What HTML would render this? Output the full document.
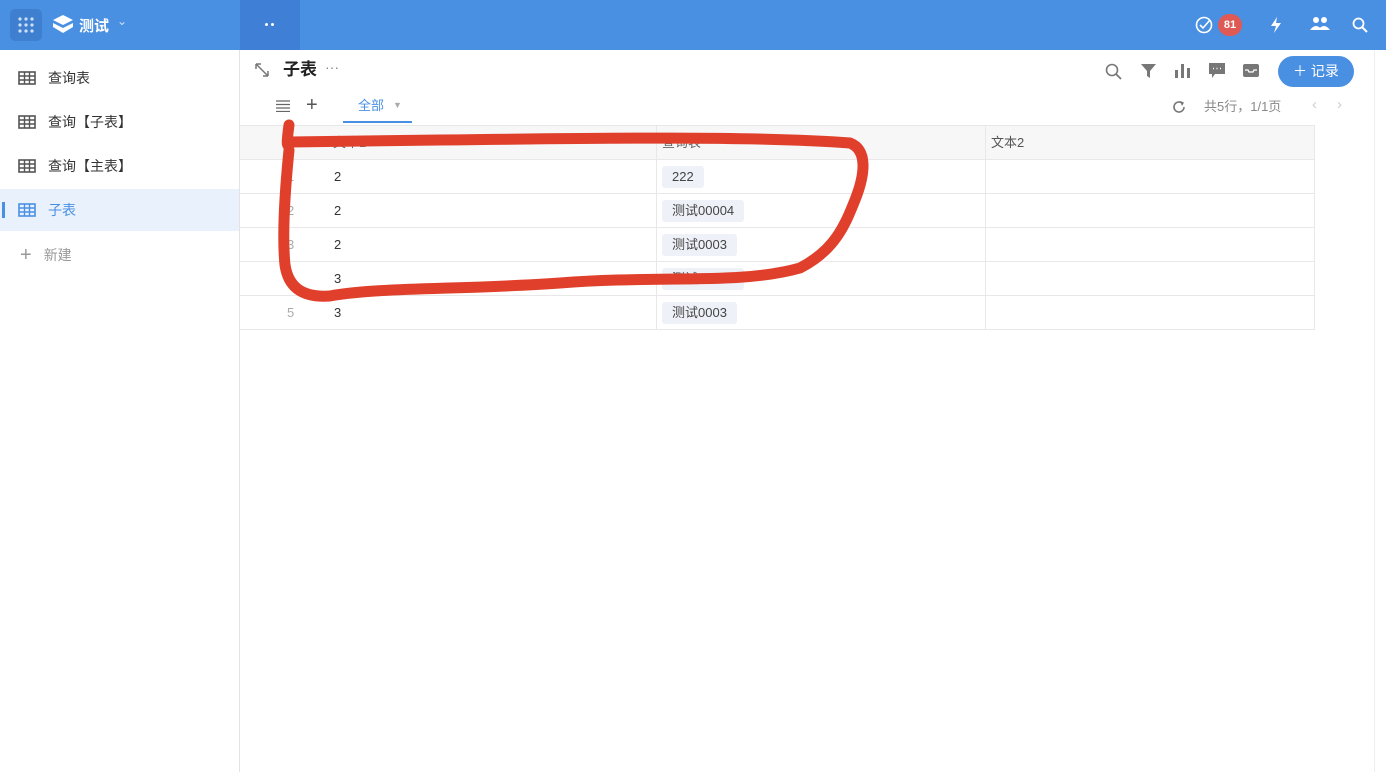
<!DOCTYPE html>
<html><head><meta charset="utf-8"><style>
*{margin:0;padding:0;box-sizing:border-box}
body{width:1386px;height:772px;overflow:hidden;background:#fff;font-family:"Liberation Sans","Noto Sans CJK SC",sans-serif;color:#333;position:relative;font-size:14px}
.top{position:absolute;left:0;top:0;width:1386px;height:50px;background:#4a90e2}
.side{position:absolute;left:0;top:50px;width:240px;height:722px;border-right:1px solid #e3e3e3;background:#fff}
.item{position:absolute;left:0;width:239px;height:42px;display:flex;align-items:center;padding-left:18px;font-size:14px;color:#333}
.item svg{margin-right:12px}
.abs{position:absolute}
.row{position:absolute;left:0;width:1074px;height:34px;border-bottom:1px solid #e8e8e8;font-size:13px}
.row div{position:absolute;top:0;height:34px;line-height:34px}
.tag{display:inline-block;background:#eef1f8;border-radius:3px;padding:0 10px;line-height:22px;height:22px;margin-top:6px;color:#444;font-size:13px}
.vl{position:absolute;top:125px;height:205px;width:1px;background:#e8e8e8}
</style></head><body>
<div class="top">
 <div class="abs" style="left:10px;top:9px;width:32px;height:32px;background:#3f7fcf;border-radius:5px"></div>
 <svg class="abs" style="left:18px;top:17px" width="16" height="16"><g fill="#cfe0f7"><circle cx="2" cy="2" r="1.6"/><circle cx="8" cy="2" r="1.6"/><circle cx="14" cy="2" r="1.6"/><circle cx="2" cy="8" r="1.6"/><circle cx="8" cy="8" r="1.6"/><circle cx="14" cy="8" r="1.6"/><circle cx="2" cy="14" r="1.6"/><circle cx="8" cy="14" r="1.6"/><circle cx="14" cy="14" r="1.6"/></g></svg>
 <svg class="abs" style="left:52px;top:14px" width="22" height="20"><path d="M11 1 L21 6 L11 11 L1 6Z" fill="#fff"/><path d="M1 9 L11 14 L21 9 L21 13 L11 19 L1 13Z" fill="#fff"/></svg>
 <div class="abs" style="left:79px;top:15px;color:#fff;font-size:15px;font-weight:bold">测试</div>
 <div class="abs" style="left:117px;top:14px;color:#cfe0f7;font-size:12px">⌄</div>
 <div class="abs" style="left:240px;top:0;width:60px;height:50px;background:#3f80d6"></div>
 <div class="abs" style="left:265px;top:23px;width:3px;height:3px;background:#fff;border-radius:2px"></div>
 <div class="abs" style="left:271px;top:23px;width:3px;height:3px;background:#fff;border-radius:2px"></div>
 <svg class="abs" style="left:1195px;top:16px" width="18" height="18"><circle cx="9" cy="9" r="7.5" fill="none" stroke="#fff" stroke-width="1.6"/><path d="M5 9 L8 12 L15 4" fill="none" stroke="#fff" stroke-width="1.6"/></svg>
 <div class="abs" style="left:1218px;top:14px;width:24px;height:22px;border-radius:11px;background:#e05a55;color:#fff;font-size:11px;font-weight:bold;text-align:center;line-height:22px">81</div>
 <svg class="abs" style="left:1267px;top:16px" width="18" height="18"><path d="M10 1 L4 10 L9 10 L7 17 L14 7 L9 7 Z" fill="#fff"/></svg>
 <svg class="abs" style="left:1310px;top:16px" width="20" height="16"><circle cx="6" cy="4" r="3" fill="#fff"/><circle cx="14" cy="4" r="3" fill="#fff"/><path d="M0 14 Q6 6 12 14Z M8 14 Q14 6 20 14Z" fill="#fff"/></svg>
 <svg class="abs" style="left:1352px;top:17px" width="16" height="16"><circle cx="6.5" cy="6.5" r="5" fill="none" stroke="#fff" stroke-width="1.8"/><path d="M10 10 L15 15" stroke="#fff" stroke-width="2"/></svg>
</div>
<div class="side">
 <div class="item" style="top:7px"><svg width="18" height="14"><rect x="1" y="1" width="16" height="12" fill="none" stroke="#555" stroke-width="1.6"/><path d="M1 5H17M1 9H17M6.5 1V13M11.5 1V13" stroke="#555" stroke-width="1.4"/></svg>查询表</div>
 <div class="item" style="top:51px"><svg width="18" height="14"><rect x="1" y="1" width="16" height="12" fill="none" stroke="#555" stroke-width="1.6"/><path d="M1 5H17M1 9H17M6.5 1V13M11.5 1V13" stroke="#555" stroke-width="1.4"/></svg>查询【子表】</div>
 <div class="item" style="top:95px"><svg width="18" height="14"><rect x="1" y="1" width="16" height="12" fill="none" stroke="#555" stroke-width="1.6"/><path d="M1 5H17M1 9H17M6.5 1V13M11.5 1V13" stroke="#555" stroke-width="1.4"/></svg>查询【主表】</div>
 <div class="item" style="top:139px;background:#e8f1fc;color:#4a90e2"><div class="abs" style="left:2px;top:13px;width:3px;height:16px;background:#4a90e2"></div><svg width="18" height="14"><rect x="1" y="1" width="16" height="12" fill="none" stroke="#4a90e2" stroke-width="1.6"/><path d="M1 5H17M1 9H17M6.5 1V13M11.5 1V13" stroke="#4a90e2" stroke-width="1.4"/></svg>子表</div>
 <div class="item" style="top:184px;color:#999"><span style="font-size:20px;margin:0 12px 0 2px;color:#999">+</span>新建</div>
</div>
<svg class="abs" style="left:254px;top:62px" width="16" height="16"><path d="M2 2L14 14M2 2V7M2 2H7M14 14V9M14 14H9" stroke="#777" stroke-width="1.5" fill="none"/></svg>
<div class="abs" style="left:283px;top:59px;font-size:17px;font-weight:bold;color:#222;line-height:22px">子表</div>
<div class="abs" style="left:325px;top:59px;color:#888;font-size:14px">···</div>
<svg class="abs" style="left:276px;top:100px" width="14" height="12"><path d="M0 1H14M0 4.5H14M0 8H14M0 11.5H14" stroke="#666" stroke-width="1.3"/></svg>
<div class="abs" style="left:306px;top:93px;font-size:20px;color:#555;line-height:24px">+</div>
<div class="abs" style="left:358px;top:97px;font-size:13px;color:#4a90e2;line-height:18px">全部</div>
<div class="abs" style="left:393px;top:100px;font-size:9px;color:#aaa">▼</div>
<div class="abs" style="left:343px;top:121px;width:69px;height:2px;background:#4a90e2"></div>
<svg class="abs" style="left:1105px;top:63px" width="17" height="17"><circle cx="7" cy="7" r="5.5" fill="none" stroke="#777" stroke-width="1.6"/><path d="M11 11L16 16" stroke="#777" stroke-width="1.8"/></svg>
<svg class="abs" style="left:1141px;top:63px" width="15" height="15"><path d="M0 1H15L9 8V15L6 13V8Z" fill="#777"/></svg>
<svg class="abs" style="left:1175px;top:63px" width="15" height="15"><rect x="0" y="7" width="3" height="8" fill="#777"/><rect x="6" y="1" width="3" height="14" fill="#777"/><rect x="12" y="5" width="3" height="10" fill="#777"/></svg>
<svg class="abs" style="left:1209px;top:63px" width="16" height="16"><path d="M0 0H16V11H6L3 15V11H0Z" fill="#777"/><path d="M4 5.5h1M7.5 5.5h1M11 5.5h1" stroke="#fff" stroke-width="1.5"/></svg>
<svg class="abs" style="left:1243px;top:64px" width="16" height="13"><rect x="0" y="0" width="16" height="13" rx="2" fill="#777"/><path d="M2 6H5L6 8H10L11 6H14" stroke="#fff" stroke-width="1.3" fill="none"/></svg>
<div class="abs" style="left:1278px;top:56px;width:76px;height:31px;border-radius:16px;background:#4a90e2;color:#fff;font-size:14px;line-height:31px;text-align:center">＋ 记录</div>
<svg class="abs" style="left:1172px;top:100px" width="14" height="14"><path d="M12 7A5 5 0 1 1 10 3" fill="none" stroke="#777" stroke-width="1.6"/><path d="M8 1L12 2.5L10 6Z" fill="#777"/></svg>
<div class="abs" style="left:1204px;top:98px;font-size:13px;color:#888;line-height:18px">共5行，1/1页</div>
<div class="abs" style="left:1312px;top:96px;font-size:15px;color:#ccc">‹</div>
<div class="abs" style="left:1337px;top:96px;font-size:15px;color:#ccc">›</div>
<div class="abs" style="left:1374px;top:50px;width:1px;height:722px;background:#eee"></div>
<div class="abs" style="left:240px;top:125px;width:1074px;height:35px;background:#f7f7f7;border-top:1px solid #e8e8e8;border-bottom:1px solid #e8e8e8"></div>
<div class="abs" style="left:333px;top:134px;font-size:13px;color:#666;line-height:18px">文本1</div>
<div class="abs" style="left:662px;top:134px;font-size:13px;color:#666;line-height:18px">查询表</div>
<div class="abs" style="left:991px;top:134px;font-size:13px;color:#555;line-height:18px">文本2</div>
<div class="row" style="left:240px;top:160px"><div style="left:47px;color:#aaa">1</div><div style="left:94px">2</div><div style="left:422px"><span class="tag">222</span></div></div>
<div class="row" style="left:240px;top:194px"><div style="left:47px;color:#aaa">2</div><div style="left:94px">2</div><div style="left:422px"><span class="tag">测试00004</span></div></div>
<div class="row" style="left:240px;top:228px"><div style="left:47px;color:#aaa">3</div><div style="left:94px">2</div><div style="left:422px"><span class="tag">测试0003</span></div></div>
<div class="row" style="left:240px;top:262px"><div style="left:47px;color:#aaa">4</div><div style="left:94px">3</div><div style="left:422px"><span class="tag">测试00004</span></div></div>
<div class="row" style="left:240px;top:296px"><div style="left:47px;color:#aaa">5</div><div style="left:94px">3</div><div style="left:422px"><span class="tag">测试0003</span></div></div>
<div class="vl" style="left:656px"></div><div class="vl" style="left:985px"></div><div class="vl" style="left:1314px"></div>
<svg class="abs" style="left:0;top:0" width="1386" height="772"><path d="M289 125 C287 140 286 150 290 142 L440 140 C600 138 760 136 850 143 C868 150 865 175 855 200 C845 225 835 250 800 268 C740 285 660 275 560 283 C460 290 380 287 330 296 C300 298 288 285 285 265 C282 235 285 190 289 150" fill="none" stroke="#e0402b" stroke-width="11" stroke-linecap="round" stroke-linejoin="round"/></svg>
</body></html>
